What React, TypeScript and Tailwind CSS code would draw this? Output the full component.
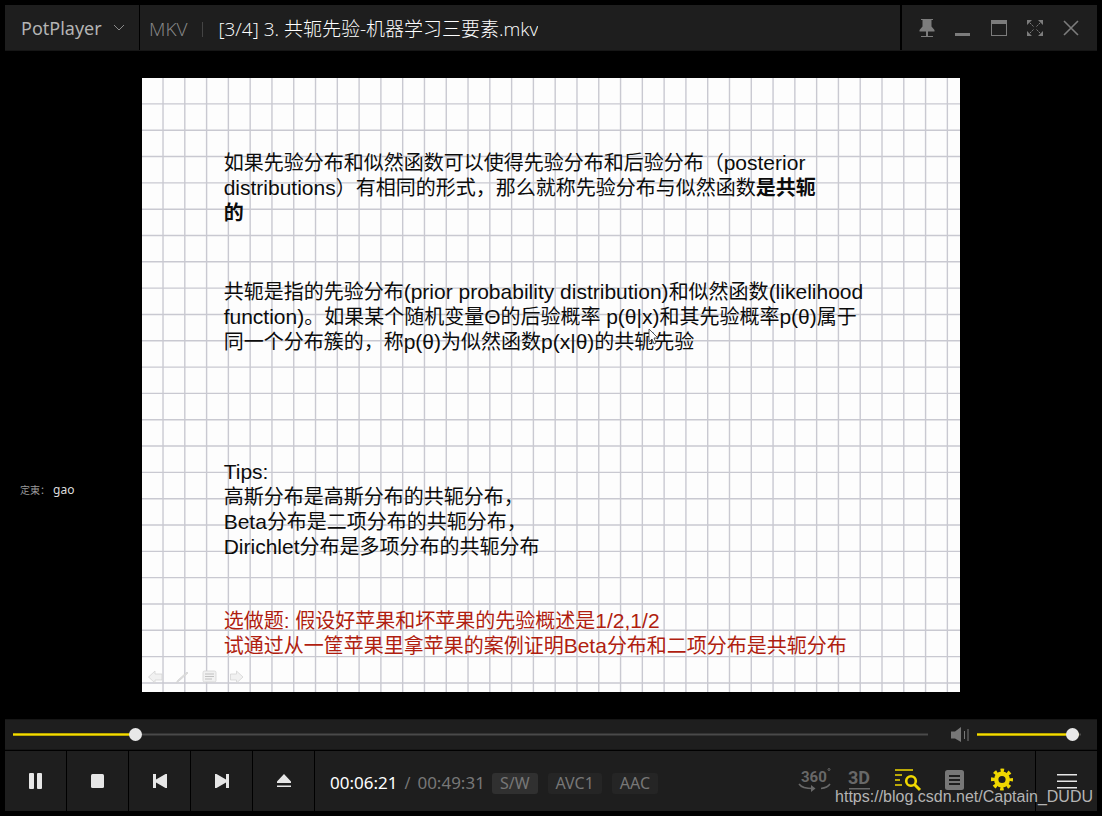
import React from "react";
import { useState } from "react";

const DURATION = 2971;

const controlCell = "flex w-[61px] items-center justify-center bg-[#1e1e1e] text-[#e6e6e6]";

const rangeClass =
	"relative h-[12px] w-full cursor-pointer appearance-none bg-transparent outline-none [&::-webkit-slider-thumb]:h-[13px] [&::-webkit-slider-thumb]:w-[13px] [&::-webkit-slider-thumb]:appearance-none [&::-webkit-slider-thumb]:rounded-full [&::-webkit-slider-thumb]:bg-[#e8e8e8]";

type SliderProps = {
	label: string;
	value: number;
	max: number;
	onChange: (value: number) => void;
};

function Slider({ label, value, max, onChange }: SliderProps) {
	return (
		<div className="relative flex h-[30px] w-full items-center">
			<div className="absolute inset-x-0 h-[3px] border-y border-[#333] bg-[#4a4a4a]">
				<div
					className="-mt-px h-[3px] border-y border-[#b8a600] bg-[#f5dc00]"
					style={{ width: `${(value / max) * 100}%` }}
				/>
			</div>
			<input
				type="range"
				aria-label={label}
				min={0}
				max={max}
				value={value}
				onChange={(e) => onChange(Number(e.target.value))}
				className={rangeClass}
			/>
		</div>
	);
}

function formatTime(seconds: number) {
	const pad = (n: number) => String(n).padStart(2, "0");
	return `${pad(Math.floor(seconds / 3600))}:${pad(Math.floor(seconds / 60) % 60)}:${pad(seconds % 60)}`;
}

function TitleBar() {
	return (
		<header className="flex h-[46px] shrink-0 border-b border-[#161616] font-['Open_Sans','Noto_Sans_CJK_SC',sans-serif]">
			<button className="mr-px flex w-[134px] shrink-0 items-center gap-[11px] bg-[#1e1e1e] pl-4 text-[#b4b4b4]">
				<span className="font-['Noto_Sans',sans-serif] text-[18px] leading-6">PotPlayer</span>
				<svg width="12" height="8" viewBox="0 0 12 8" fill="none" stroke="#8a8a8a">
					<path d="M1 1l5 5 5-5" />
				</svg>
			</button>
			<div className="mr-[2px] flex min-w-0 flex-1 items-center bg-[#1e1e1e] pl-[9px] pt-[3px] text-[19px] font-light">
				<span className="text-[#8a8a8a]">MKV</span>
				<span className="mx-[15px] h-[15px] w-px bg-[#444]" />
				<h1 className="truncate text-white">[3/4] 3. 共轭先验-机器学习三要素.mkv</h1>
			</div>
			<div className="flex w-[195px] shrink-0 items-center justify-center gap-[4px] bg-[#1e1e1e] pr-[2px] text-[#7c7c7c]">
				<button aria-label="Pin" className="flex h-8 w-8 items-center justify-center">
					<svg width="16" height="18" viewBox="0 0 16 18" fill="currentColor">
						<path d="M2 0h12v1h-1.500v6.500L15.500 11v1.500H.5V11L3.500 7.500V1H2zM7 12.500h2V17H7zM2 17h12v1H2z" />
					</svg>
				</button>
				<button aria-label="Minimize" className="flex h-8 w-8 items-center justify-center">
					<svg width="16" height="18" viewBox="0 0 16 18" fill="currentColor">
						<path d="M0 14h15v3H0z" />
					</svg>
				</button>
				<button aria-label="Maximize" className="flex h-8 w-8 items-center justify-center">
					<svg width="16" height="18" viewBox="0 0 16 18" fill="currentColor" fillRule="evenodd">
						<path d="M0 1h16v16H0zM1 5v11h14V5z" />
					</svg>
				</button>
				<button aria-label="Full screen" className="flex h-8 w-8 items-center justify-center">
					<svg width="16" height="18" viewBox="0 0 16 18" fill="currentColor">
						<path d="M0 1h5L0 6zM16 1v5l-5-5zM0 17v-5l5 5zM16 17h-5l5-5z" />
						<path
							d="M3 4l3.500 3.500M13 4L9.500 7.500M3 14l3.500-3.500M13 14l-3.500-3.500"
							stroke="currentColor"
							strokeDasharray="2 1"
						/>
					</svg>
				</button>
				<button aria-label="Close" className="flex h-8 w-8 items-center justify-center">
					<svg width="16" height="16" viewBox="0 0 16 16" stroke="currentColor" strokeWidth="1.6">
						<path d="M1 1l14 14M15 1L1 15" />
					</svg>
				</button>
			</div>
		</header>
	);
}

function GridPaper() {
	return (
		<svg className="absolute inset-0 h-full w-full" viewBox="0 0 818 614" preserveAspectRatio="none">
			<g stroke="#c9c9d1" strokeWidth="1.4">
				{Array.from({ length: 37 }, (_, i) => (
					<path key={i} d={`M${21 + i * 21.77} 0V614`} />
				))}
				{Array.from({ length: 23 }, (_, i) => (
					<path key={i} d={`M0 ${25.9 + i * 26.32}H818`} />
				))}
			</g>
		</svg>
	);
}

function SlideTools() {
	return (
		<svg
			className="absolute bottom-2 left-[6px]"
			width="96"
			height="14"
			viewBox="0 0 96 14"
			fill="#f1f1f1"
			stroke="#d4d4d4"
			strokeWidth="0.8"
		>
			<path d="M0.500 7L7 1v3h7v6H7v3z" />
			<path d="M28 13l2-3 9-8 1 1-9 8z" fill="#ddd" />
			<rect x="55" y="1" width="13" height="11" rx="1.500" />
			<path d="M57 4h9M57 6.500h9M57 9h7" stroke="#b5b5b5" />
			<path d="M95 7l-6.500-6v3h-6v6h6v3z" />
		</svg>
	);
}

// latin runs are set one size up from the chinese text
function En({ children }: { children: React.ReactNode }) {
	return <span className="text-[21px] leading-5">{children}</span>;
}

function Slide() {
	return (
		<article className="relative aspect-[4/3] overflow-hidden bg-[#fdfdfd]">
			<GridPaper />
			<div className="relative whitespace-nowrap pl-[82px] pt-[73px] font-['Liberation_Sans','Noto_Sans_CJK_SC',sans-serif] text-[20px] leading-[25px] text-[#0c0c0c]">
				<p>
					如果先验分布和似然函数可以使得先验分布和后验分布（<En>posterior</En>
					<br />
					<En>distributions</En>）有相同的形式，那么就称先验分布与似然函数<b>是共轭</b>
					<br />
					<b>的</b>
				</p>
				<p className="mt-[54px]">
					共轭是指的先验分布<En>(prior probability distribution)</En>和似然函数<En>(likelihood</En>
					<br />
					<En>function)</En>。如果某个随机变量<En>Θ</En>的后验概率 <En>p(θ|x)</En>和其先验概率<En>p(θ)</En>属于
					<br />
					同一个分布簇的，称<En>p(θ)</En>为似然函数<En>p(x|θ)</En>的共轭先验
				</p>
				<p className="mt-[105px]">
					<En>Tips:</En>
					<br />
					高斯分布是高斯分布的共轭分布，
					<br />
					<En>Beta</En>分布是二项分布的共轭分布，
					<br />
					<En>Dirichlet</En>分布是多项分布的共轭分布
				</p>
				<p className="mt-[49px] text-[#b01e10]">
					选做题<En>: </En>假设好苹果和坏苹果的先验概述是<En>1/2,1/2</En>
					<br />
					试通过从一筐苹果里拿苹果的案例证明<En>Beta</En>分布和二项分布是共轭分布
				</p>
			</div>
			<SlideTools />
			<svg
				className="absolute left-[506px] top-[250px]"
				width="12"
				height="18"
				viewBox="0 0 12 18"
				fill="#fff"
				stroke="#333"
				strokeWidth="0.8"
			>
				<path d="M1 1v13l3-3 2 5 2-1-2-5h4z" />
			</svg>
		</article>
	);
}

function SideIcons() {
	return (
		<div className="mb-[3px] flex items-center gap-4 text-[#777]">
			<button aria-label="360 degree video">
				<svg className="overflow-visible" width="34" height="26" viewBox="0 0 34 26" fill="none" stroke="#686868" strokeWidth="1.500">
					<text x="3" y="15" fill="#686868" stroke="none" className="font-['Roboto',sans-serif] text-[15px] font-bold">
						360
					</text>
					<circle cx="31" cy="2.500" r="1" strokeWidth="1" />
					<path d="M1 17c2 3 7 4.500 14 4.500M32 17c-2 3-5 4-9 4.500" />
					<path d="M13 18l4.500 3.500L13 25z" fill="#686868" stroke="none" />
				</svg>
			</button>
			<button aria-label="3D video">
				<svg className="overflow-visible" width="30" height="26" viewBox="0 0 30 26" fill="#686868">
					<text x="0" y="17" className="font-['Roboto',sans-serif] text-[18px] font-bold">
						3D
					</text>
					<path d="M1 21h21v1.500H1z" />
				</svg>
			</button>
			<button aria-label="Playlist search">
				<svg width="34" height="26" viewBox="0 0 34 26" fill="none" stroke="#f0d800" strokeWidth="1.400">
					<path d="M1 3h18M1 8h7M1 13h5M1 18h7" />
					<circle cx="17" cy="14" r="4.800" strokeWidth="2.600" />
					<path d="M20.500 17.500l5.500 5.500" strokeWidth="3" />
				</svg>
			</button>
			<button aria-label="Subtitles">
				<svg width="30" height="26" viewBox="0 0 30 26">
					<rect x="1" y="3" width="19" height="20" rx="2.500" fill="#777" />
					<path d="M5 9h11M5 13h11M5 17h11" stroke="#1e1e1e" strokeWidth="2" />
				</svg>
			</button>
			<button aria-label="Preferences">
				<svg width="24" height="26" viewBox="0 0 24 26" fill="none" stroke="#f0d800">
					<circle cx="12" cy="12.500" r="5.800" strokeWidth="4.400" />
					<circle cx="12" cy="12.500" r="9" strokeWidth="4" strokeDasharray="3.400 3.669" strokeDashoffset="1.700" />
				</svg>
			</button>
		</div>
	);
}

export default function App() {
	const [position, setPosition] = useState(381);
	const [volume, setVolume] = useState(98);

	return (
		<div className="relative flex h-screen flex-col overflow-hidden bg-black p-[5px]">
			<TitleBar />

			<main className="relative flex min-h-0 flex-1 justify-center pb-[27px] pt-[27px]">
				<Slide />
				<p className="absolute left-[15px] top-[431px] font-['Noto_Sans','Noto_Sans_CJK_SC',sans-serif] text-[12px] leading-4 text-[#ddd]">
					<span className="text-[10px] text-[#999]">定東：</span> gao
				</p>
			</main>

			<section className="mb-px flex h-[31px] shrink-0 items-center border-y border-[#161616] bg-[#1e1e1e] pl-2 pr-4">
				<Slider label="Position" value={position} max={DURATION} onChange={setPosition} />
				<button aria-label="Mute" className="ml-[22px] mr-2 shrink-0">
					<svg width="19" height="16" viewBox="0 0 19 16" fill="#777">
						<path d="M1 4.500h4L11 0v15L5 11.500H1zM14 4h1v8h-1zM17.500 2h1v12h-1z" />
					</svg>
				</button>
				<div className="w-[104px] shrink-0">
					<Slider label="Volume" value={volume} max={100} onChange={setVolume} />
				</div>
			</section>

			<footer className="flex h-[60px] shrink-0 gap-px">
				<button aria-label="Pause" className={controlCell}>
					<svg width="18" height="18" viewBox="0 0 18 18" fill="currentColor">
						<rect x="2" y="1" width="5" height="16" rx="1" />
						<rect x="10" y="1" width="5" height="16" rx="1" />
					</svg>
				</button>
				<button aria-label="Stop" className={controlCell}>
					<svg width="14" height="14" viewBox="0 0 14 14" fill="currentColor">
						<rect width="13" height="14" rx="1.500" />
					</svg>
				</button>
				<button aria-label="Previous" className={controlCell}>
					<svg width="14" height="14" viewBox="0 0 14 14" fill="currentColor">
						<path d="M0 0h3v5.500L12.500 0H14v14h-1.500L3 8.500V14H0z" />
					</svg>
				</button>
				<button aria-label="Next" className={controlCell}>
					<svg width="14" height="14" viewBox="0 0 14 14" fill="currentColor">
						<path d="M14 0h-3v5.500L1.500 0H0v14h1.500L11 8.500V14h3z" />
					</svg>
				</button>
				<button aria-label="Open" className={controlCell}>
					<svg width="14" height="14" viewBox="0 0 14 14" fill="currentColor">
						<path d="M7 0l7 7.500V9H0V7.500zM0 11.500h14V13H0z" />
					</svg>
				</button>
				<div className="flex flex-1 items-center justify-between bg-[#1e1e1e] pl-[15px] pr-[21px] font-['Noto_Sans',sans-serif] text-[#777]">
					<div className="flex items-center pt-1 text-[16px] leading-5">
						<time className="text-[17px] text-white">{formatTime(position)}</time>
						<span className="mx-[7px]">/</span>
						<time className="text-[17px]">{formatTime(DURATION)}</time>
						<button className="ml-[7px] rounded-[3px] bg-[#303030] px-2 pb-px">S/W</button>
						<button className="ml-[10px] rounded-[3px] bg-[#252525] px-2 pb-px">AVC1</button>
						<button className="ml-[10px] rounded-[3px] bg-[#252525] px-2 pb-px">AAC</button>
					</div>
					<SideIcons />
				</div>
				<button aria-label="Menu" className={controlCell}>
					<svg width="20" height="16" viewBox="0 0 20 16" fill="currentColor">
						<path d="M0 1h20v1.500H0zM0 7.500h20V9H0zM0 14h20v1.500H0z" />
					</svg>
				</button>
			</footer>

			<span className="pointer-events-none absolute bottom-2 right-[9px] font-['Liberation_Sans',sans-serif] text-[16px] leading-[22px] text-[#b4b4b4]">
				https://blog.csdn.net/Captain_DUDU
			</span>
		</div>
	);
}
